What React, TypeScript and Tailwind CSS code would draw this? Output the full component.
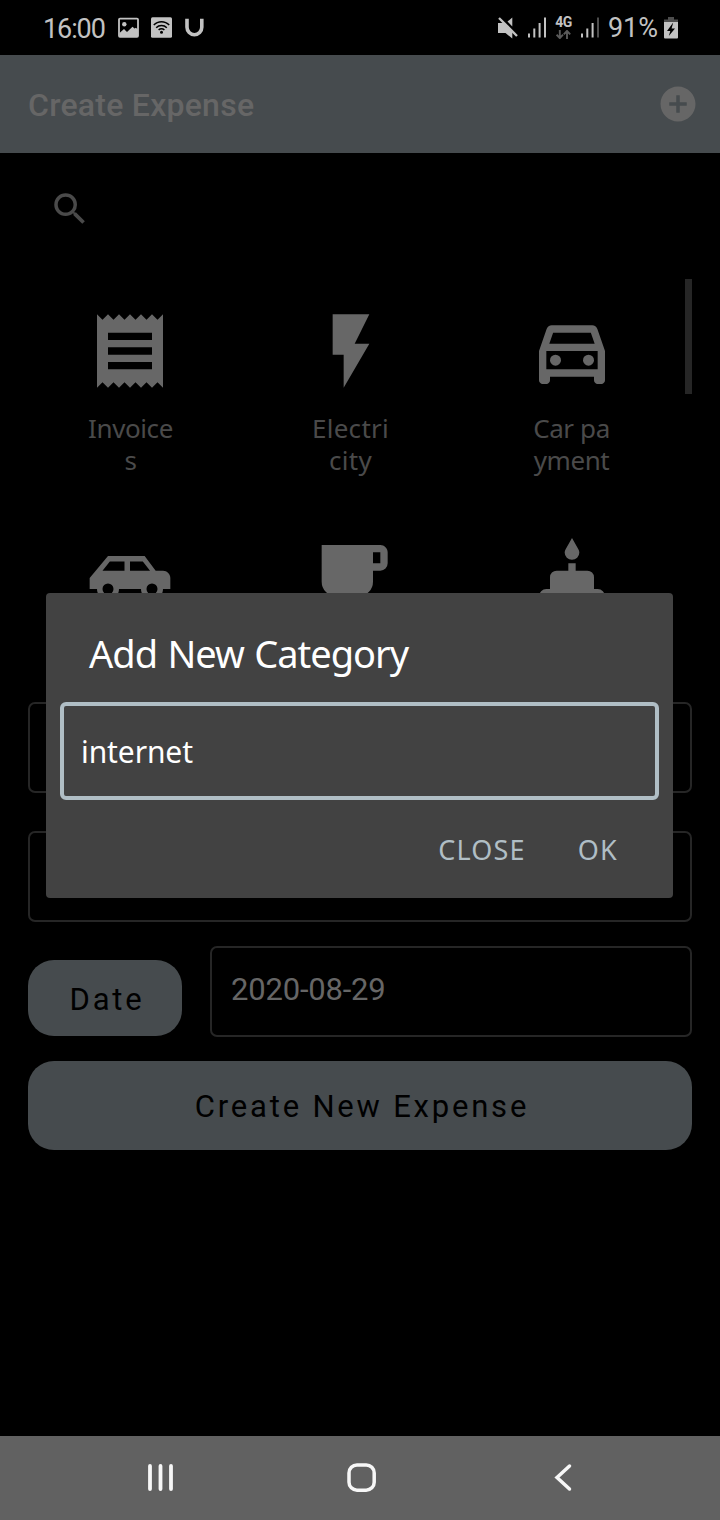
import type { ReactNode } from 'react';

const sans = "font-['Noto_Sans',sans-serif]";

function StatusBar() {
  return (
    <div className="flex h-[55px] shrink-0 items-center pl-[43px] pr-[42px] font-['Roboto',sans-serif] text-[27px] leading-none text-[#c2c2c2]">
      <span className="w-[75px] whitespace-nowrap pt-[3px] tracking-[-1.1px]">16:00</span>
      <svg className="h-[22px] w-[22px] shrink-0" viewBox="0 0 22 22">
        <rect x="1" y="1.6" width="19" height="18.2" rx="1" fill="none" stroke="currentColor" strokeWidth="1.8" />
        <circle cx="6.3" cy="7.2" r="2.2" fill="currentColor" />
        <path d="M1.500 16 6 12l3 3 5.500-5.200 2 1.700 1.500-.8 2 2V20H1.500z" fill="currentColor" />
      </svg>
      <svg className="ml-[11px] h-[22px] w-[21px] shrink-0" viewBox="0 0 21 22">
        <rect x="0" y="0.300" width="21" height="20.400" rx="1.500" fill="currentColor" />
        <g fill="none" stroke="#000" strokeWidth="1.500">
          <path d="M2.800 8a10.500 10.500 0 0 1 15.400 0" />
          <path d="M5.200 10.700a7.400 7.400 0 0 1 10.600 0" />
          <path d="M7.600 13a4.200 4.200 0 0 1 5.800 0" />
        </g>
        <circle cx="10.500" cy="15.200" r="1.500" fill="#000" />
      </svg>
      <svg className="ml-[13px] h-[20px] w-[19px] shrink-0" viewBox="0 0 19 20">
        <path d="M2 .8v8.500a7.400 7.400 0 0 0 14.800 0V.8" fill="none" stroke="currentColor" strokeWidth="3.600" />
      </svg>
      <div className="flex-1" />
      <svg className="h-[22px] w-[20px] shrink-0" viewBox="0 0 20 22">
        <path d="M0 6h5.500l8.800 9v6.500L7.500 16H0zM14.300.4v9L9.500 4.600z" fill="currentColor" />
        <path d="M1 1 19 19" stroke="currentColor" strokeWidth="2.300" />
      </svg>
      <SignalBars className="ml-[10px]" last="#c2c2c2" />
      <div className="ml-[9px] flex w-[17px] flex-col items-center pt-[1px]">
        <span className="text-[14px] font-bold leading-[11px] tracking-[-0.6px]">4G</span>
        <svg className="mt-[2px] h-[9px] w-[15px]" viewBox="0 0 15 9">
          <path d="M3.800 0v8M.6 4.700l3.200 3.400L7 4.700M11 9V1M7.800 4.300 11 .9l3.200 3.400" fill="none" stroke="#5a5a5a" strokeWidth="1.900" />
        </svg>
      </div>
      <SignalBars className="ml-[9px]" last="#4d4d4d" />
      <span className="ml-[9px] w-[56px] whitespace-nowrap pt-[2px] tracking-[-0.1px]">91%</span>
      <svg className="h-[22px] w-[14px] shrink-0" viewBox="0 0 14 22">
        <path d="M4 0h6v2.500h4V5H0V2.500h4z" fill="#4d4d4d" />
        <path d="M0 5h14v15.500a1 1 0 0 1-1 1H1a1 1 0 0 1-1-1z" fill="currentColor" />
        <path d="M9.200 5.500 3 14h3.300l-1.500 5L11 11.500H7.600z" fill="#000" />
      </svg>
    </div>
  );
}

function SignalBars({ className, last }: { className: string; last: string }) {
  return (
    <svg className={`h-[21px] w-[18px] shrink-0 ${className}`} viewBox="0 0 18 21">
      <path d="M0 16.500h2V20.500H0zM5.300 11.500h2v9h-2zM10.600 6h2v14.500h-2z" fill="currentColor" />
      <path d="M16 .5h2v20h-2z" fill={last} />
    </svg>
  );
}

function CategoryIcon({ children }: { children: ReactNode }) {
  return (
    <svg className="h-[88px] w-[88px]" viewBox="0 0 24 24" fill="#676767" fillRule="evenodd">
      {children}
    </svg>
  );
}

const categories = [
  {
    id: 'invoices',
    label: 'Invoice\ns',
    tracking: 'tracking-[-0.4px] pl-[2px]',
    icon: (
      <path d="M18 17H6v-2h12v2zm0-4H6v-2h12v2zm0-4H6V7h12v2zM3 22l1.500-1.500L6 22l1.500-1.500L9 22l1.500-1.500L12 22l1.500-1.500L15 22l1.500-1.500L18 22l1.500-1.500L21 22V2l-1.500 1.500L18 2l-1.500 1.500L15 2l-1.500 1.500L12 2l-1.500 1.500L9 2 7.500 3.500 6 2 4.500 3.500 3 2v20z" />
    ),
  },
  {
    id: 'electricity',
    label: 'Electri\ncity',
    tracking: 'tracking-[0.3px]',
    icon: <path d="M7 2v11h3v9l7-12h-4l4-8z" />,
  },
  {
    id: 'car-payment',
    label: 'Car pa\nyment',
    tracking: 'tracking-[-0.4px]',
    icon: (
      <>
        <path d="M18.920 6.010C18.720 5.420 18.160 5 17.500 5h-11c-.66 0-1.210.42-1.420 1.010L3 12v8c0 .55.45 1 1 1h1c.55 0 1-.45 1-1v-1h12v1c0 .55.45 1 1 1h1c.55 0 1-.45 1-1v-8l-2.080-5.990zM6.850 7h10.290l1.040 3H5.810l1.040-3zM19 17H5v-5h14v5z" />
        <circle cx="7.500" cy="14.500" r="1.500" />
        <circle cx="16.500" cy="14.500" r="1.500" />
      </>
    ),
  },
  {
    id: 'car',
    icon: (
      <path d="M16 6H6l-5 6v3h2a3 3 0 0 0 6 0h6a3 3 0 0 0 6 0h2v-3c0-1.110-.89-2-2-2h-2l-3-4M6.500 7.500h4V10h-6l2-2.500m5.500 0h3.500l1.960 2.500H12V7.500m-6 6a1.500 1.500 0 1 1 0 3 1.500 1.500 0 0 1 0-3m12 0a1.500 1.500 0 1 1 0 3 1.500 1.500 0 0 1 0-3z" />
    ),
  },
  {
    id: 'coffee',
    icon: (
      <path d="M2 21h18v-2H2M20 8h-2V5h2m0-2H4v10a4 4 0 0 0 4 4h6a4 4 0 0 0 4-4v-3h2a2 2 0 0 0 2-2V5c0-1.110-.9-2-2-2z" />
    ),
  },
  {
    id: 'cake',
    icon: (
      <path d="M12 1.100 10.300 4.100C10.100 4.400 10 4.700 10 5.050a2 2 0 0 0 4 0c0-.35-.1-.65-.3-.95zM11 8h2v2h3.200A1.800 1.800 0 0 1 18 11.800V15h1a2 2 0 0 1 2 2v6H3v-6a2 2 0 0 1 2-2h1v-3.200A1.800 1.800 0 0 1 7.800 10H11z" />
    ),
  },
];

function Dialog() {
  return (
    <div className={`absolute left-[46px] top-[593px] flex h-[305px] w-[627px] flex-col rounded-[4px] bg-[#424242] px-[14px] ${sans}`}>
      <h2 className="flex h-[109px] items-center pl-[29px] pt-[10px] text-[38px] leading-none tracking-[-1px] [word-spacing:1.500px] text-white">
        Add New Category
      </h2>
      <div className="flex h-[98px] w-[599px] items-center rounded-[6px] border-4 border-[#b0bec5] pl-[17px] pt-[2px] text-[30px] leading-none tracking-[-0.1px] text-white">
        internet
      </div>
      <div className="flex h-[98px] items-center justify-end gap-[52px] pr-[41px] text-[27px] leading-none text-[#b0bec5]">
        <button className="tracking-[1.200px]">CLOSE</button>
        <button className="tracking-[1.200px]">OK</button>
      </div>
    </div>
  );
}

export default function App() {
  return (
    <div className="relative flex h-[1520px] w-[720px] flex-col overflow-hidden bg-black font-['Roboto',sans-serif]">
      <StatusBar />
      <header className="flex h-[98px] shrink-0 items-center justify-between bg-[#464b4e] pl-[28px] pr-[21px]">
        <h1 className="pt-[2px] text-[32px] font-medium leading-none tracking-[0.25px] text-[#666666]">Create Expense</h1>
        <svg className="h-[42px] w-[42px]" viewBox="0 0 24 24" fill="#666666">
          <path d="M12 2C6.480 2 2 6.480 2 12s4.480 10 10 10 10-4.480 10-10S17.520 2 12 2zm5 11h-4v4h-2v-4H7v-2h4V7h2v4h4v2z" />
        </svg>
      </header>

      <div className="flex h-[126px] shrink-0 pl-[49px] pt-[35px]">
        <svg className="h-[42px] w-[42px]" viewBox="0 0 24 24" fill="#4a4a4a">
          <path d="M15.500 14h-.79l-.28-.27A6.471 6.471 0 0 0 16 9.500 6.500 6.500 0 1 0 9.500 16c1.610 0 3.090-.59 4.230-1.570l.27.28v.79l5 4.990L20.490 19l-4.990-5zm-6 0C7.010 14 5 11.990 5 9.500S7.010 5 9.500 5 14 7.010 14 9.500 11.990 14 9.500 14z" />
        </svg>
      </div>

      <section className="flex h-[385px] shrink-0 justify-between overflow-hidden pl-[19px] pr-[28px]">
        <div className="grid w-[663px] auto-rows-[227px] grid-cols-3 pt-[28px]">
          {categories.map((c) => (
            <div key={c.id} className="flex flex-col items-center">
              <CategoryIcon>{c.icon}</CategoryIcon>
              {c.label && (
                <p className={`mt-[17px] whitespace-pre-line text-center text-[26px] leading-[32px] text-[#4a4a4a] ${sans} ${c.tracking}`}>
                  {c.label}
                </p>
              )}
            </div>
          ))}
        </div>
        <div className="h-[115px] w-[7px] shrink-0 bg-[#262626]" />
      </section>

      <form className="flex flex-col px-[28px] pt-[38px]">
        <div className="h-[91px] rounded-[7px] border-2 border-[#262626]" />
        <div className="mt-[38px] h-[91px] rounded-[7px] border-2 border-[#262626]" />
        <div className="mt-[24px] flex items-start gap-[28px]">
          <button type="button" className="mt-[14px] h-[76px] w-[154px] rounded-[26px] bg-[#464b4e] pl-[4px] pt-[3px] text-[31px] leading-none tracking-[2.800px] text-black">
            Date
          </button>
          <div className="flex h-[91px] flex-1 items-center rounded-[7px] border-2 border-[#262626] pb-[4px] pl-[19px] text-[31px] leading-none tracking-[-0.2px] text-[#666666]">
            2020-08-29
          </div>
        </div>
        <button type="button" className="mt-[24px] h-[89px] rounded-[26px] bg-[#464b4e] pl-[4px] pt-[2px] text-[31px] leading-none tracking-[2.800px] text-black">
          Create New Expense
        </button>
      </form>

      <Dialog />

      <nav className="mt-auto flex h-[84px] shrink-0 items-center justify-between bg-[#616161] pl-[145px] pr-[145px]">
        <svg className="h-[30px] w-[30px]" viewBox="0 0 30 30">
          <path d="M5 3v23M15.500 3v23M26 3v23" stroke="#f7f7f7" strokeWidth="3.800" strokeLinecap="round" />
        </svg>
        <svg className="h-[30px] w-[32px]" viewBox="0 0 32 30">
          <rect x="5" y="2" width="25.200" height="25.200" rx="8" fill="none" stroke="#f7f7f7" strokeWidth="3.500" />
        </svg>
        <svg className="h-[30px] w-[30px]" viewBox="0 0 30 30">
          <path d="M24.500 3 12 14.500 24.500 26" fill="none" stroke="#f7f7f7" strokeWidth="3.500" strokeLinecap="round" />
        </svg>
      </nav>
    </div>
  );
}
